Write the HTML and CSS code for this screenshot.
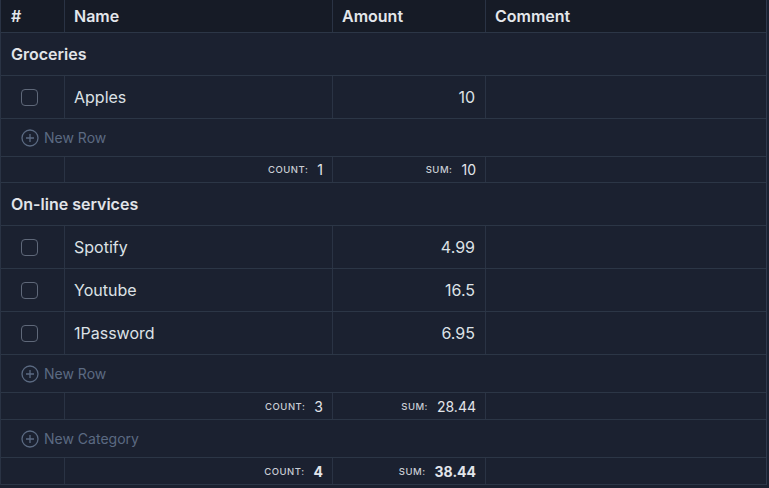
FILE: index.html
```html
<!DOCTYPE html>
<html>
<head>
<meta charset="utf-8">
<link rel="stylesheet" href="styles.css">
</head>
<body>
<div class="table">
  <div class="row head">
    <div class="c c-num">#</div>
    <div class="c c-name">Name</div>
    <div class="c c-amt">Amount</div>
    <div class="c c-com">Comment</div>
  </div>

  <div class="row cat"><div class="c">Groceries</div></div>
  <div class="row data">
    <div class="c c-num"><span class="box"></span></div>
    <div class="c c-name">Apples</div>
    <div class="c c-amt num">10</div>
    <div class="c c-com"></div>
  </div>
  <div class="row add"><div class="c"><svg class="plus" viewBox="0 0 18 18"><circle cx="9" cy="9" r="8" /><path d="M9 5v8M5 9h8" /></svg>New Row</div></div>
  <div class="row foot">
    <div class="c c-num"></div>
    <div class="c c-name num"><span class="lbl">COUNT:</span><span class="val">1</span></div>
    <div class="c c-amt num"><span class="lbl">SUM:</span><span class="val">10</span></div>
    <div class="c c-com"></div>
  </div>

  <div class="row cat"><div class="c">On-line services</div></div>
  <div class="row data">
    <div class="c c-num"><span class="box"></span></div>
    <div class="c c-name">Spotify</div>
    <div class="c c-amt num">4.99</div>
    <div class="c c-com"></div>
  </div>
  <div class="row data">
    <div class="c c-num"><span class="box"></span></div>
    <div class="c c-name">Youtube</div>
    <div class="c c-amt num">16.5</div>
    <div class="c c-com"></div>
  </div>
  <div class="row data">
    <div class="c c-num"><span class="box"></span></div>
    <div class="c c-name">1Password</div>
    <div class="c c-amt num">6.95</div>
    <div class="c c-com"></div>
  </div>
  <div class="row add"><div class="c"><svg class="plus" viewBox="0 0 18 18"><circle cx="9" cy="9" r="8" /><path d="M9 5v8M5 9h8" /></svg>New Row</div></div>
  <div class="row foot foot2">
    <div class="c c-num"></div>
    <div class="c c-name num"><span class="lbl">COUNT:</span><span class="val">3</span></div>
    <div class="c c-amt num"><span class="lbl">SUM:</span><span class="val">28.44</span></div>
    <div class="c c-com"></div>
  </div>

  <div class="row add"><div class="c"><svg class="plus" viewBox="0 0 18 18"><circle cx="9" cy="9" r="8" /><path d="M9 5v8M5 9h8" /></svg>New Category</div></div>
  <div class="row foot foot2 total">
    <div class="c c-num"></div>
    <div class="c c-name num"><span class="lbl">COUNT:</span><span class="val">4</span></div>
    <div class="c c-amt num"><span class="lbl">SUM:</span><span class="val">38.44</span></div>
    <div class="c c-com"></div>
  </div>
</div>
</body>
</html>
```
FILE: styles.css
```css
html, body {
  margin: 0;
  padding: 0;
  background: #1b2130;
  height: 100%;
}
body {
  font-family: Inter, "Noto Sans", "Liberation Sans", sans-serif;
  color: #dfe2e7;
  overflow: hidden;
}
.table {
  width: 767px;
  border-left: 1px solid #2a3344;
  border-right: 1px solid #2f3a4d;
  border-top: 1px solid #252d3b;
  box-sizing: border-box;
  margin-top: -1px;
}
.row {
  display: flex;
  border-bottom: 1px solid #2c3646;
  box-sizing: border-box;
}
.c {
  box-sizing: border-box;
  display: flex;
  align-items: center;
  padding: 0 10px;
  white-space: nowrap;
}
.c-num { width: 64px; border-right: 1px solid #2a3344; }
.c-name { width: 268px; border-right: 1px solid #2a3344; padding-left: 9px; }
.c-amt { width: 153px; border-right: 1px solid #2a3344; padding-left: 9px; }
.c-com { flex: 1; padding-left: 9px; }
.num { justify-content: flex-end; }

.head {
  height: 33px;
  background: #161b26;
  font-size: 16px;
  font-weight: 600;
  color: #e4e7eb;
}

.cat {
  height: 43px;
  font-size: 16px;
  font-weight: 600;
  color: #e1e4e9;
}
.cat .c { flex: 1; }

.data {
  height: 43px;
  font-size: 16px;
  color: #dde1e6;
}
.data .c-num { padding-left: 20px; }
.box {
  box-sizing: border-box;
  width: 17px;
  height: 17px;
  border: 1.5px solid #5f6879;
  border-radius: 4px;
}

.add {
  height: 38px;
  font-size: 14px;
  color: #5b6a82;
}
.add .c { flex: 1; padding-left: 20px; }
.plus {
  width: 18px;
  height: 18px;
  margin-right: 5px;
  fill: none;
  stroke: #5b6a82;
  stroke-width: 1.3;
}

.foot {
  height: 26px;
  color: #e2e5ea;
}
.foot .c-name, .foot .c-amt { padding-right: 9px; }
.foot2 { height: 27px; }
.lbl {
  font-size: 9.5px;
  letter-spacing: 0.5px;
  color: #c9cdd4;
  margin-right: 9px;
  font-weight: 500;
}
.val {
  font-size: 14px;
  font-weight: 400;
}
.total .val { font-weight: 700; }
```
